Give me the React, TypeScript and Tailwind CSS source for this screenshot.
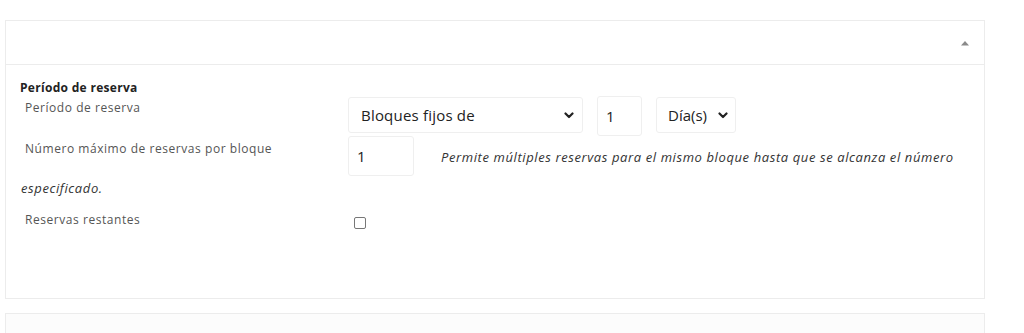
import React from "react";

function Chevron({ className = "" }: { className?: string }) {
  return (
    <svg width="10" height="7" viewBox="0 0 10 7" className={className}>
      <path d="M1.5 1.5 L5 5 L8.5 1.5" fill="none" stroke="#222" strokeWidth="2.2" strokeLinecap="round" strokeLinejoin="round" />
    </svg>
  );
}

export default function App() {
  const font = { fontFamily: '"Open Sans", "DejaVu Sans", sans-serif' };
  return (
    <div className="bg-white w-[1024px] h-[333px] overflow-hidden pt-[20px] pl-[5px]" style={font}>
      <div className="w-[980px] border border-[#ececec]">
        <div className="h-[44px] border-b border-[#ececec] flex items-center justify-end pr-[14px]">
          <svg width="10" height="6" viewBox="0 0 10 6">
            <path d="M1 5.5 L5 1 L9 5.5 Z" fill="#8a8a8a" />
          </svg>
        </div>
        <div className="px-[14px] pt-[15px] pb-[69px]">
          <div className="text-[12px] leading-[16px] font-bold text-[#222] tracking-[0.3px]">Período de reserva</div>
          <div className="flex items-start">
            <div className="w-[328px] pl-[5px] pt-[4px] text-[12px] leading-[16px] text-[#555] tracking-[0.55px]">Período de reserva</div>
            <div className="flex items-start gap-[14px]">
              <div className="w-[235px] h-[36px] mt-[1px] border border-[#efefef] rounded-[3px] flex items-center justify-between pl-[12px] pr-[8px] text-[15px] text-[#222]">
                <span className="tracking-[0.2px]">Bloques fijos de</span>
                <Chevron />
              </div>
              <div className="w-[45px] h-[40px] border border-[#efefef] rounded-[3px] flex items-center pl-[8px] text-[15px] text-[#222]">1</div>
              <div className="w-[80px] h-[36px] mt-[1px] border border-[#efefef] rounded-[3px] flex items-center justify-between pl-[11px] pr-[7px] text-[15px] text-[#222]">
                <span>Día(s)</span>
                <Chevron />
              </div>
            </div>
          </div>
          <div className="flex items-start">
            <div className="w-[328px] pl-[5px] pt-[5px] text-[12px] leading-[16px] text-[#555] tracking-[0.55px]">Número máximo de reservas por bloque</div>
            <div className="w-[66px] h-[40px] border border-[#efefef] rounded-[3px] flex items-center pl-[8px] text-[15px] text-[#222]">1</div>
            <div className="ml-[27px] pt-[13px] text-[13px] leading-[16px] italic text-[#333] tracking-[0.6px]">
              Permite múltiples reservas para el mismo bloque hasta que se alcanza el número
            </div>
          </div>
          <div className="mt-[4px] pl-[1px] text-[13px] leading-[16px] italic text-[#333] tracking-[0.6px]">especificado.</div>
          <div className="flex items-start mt-[16px]">
            <div className="w-[328px] pl-[5px] text-[12px] leading-[16px] text-[#555] tracking-[0.55px]">Reservas restantes</div>
            <div className="ml-[6px] mt-[5px] w-[12px] h-[12px] border border-[#777] rounded-[2px] bg-white" />
          </div>
        </div>
      </div>
      <div className="w-[980px] h-[40px] mt-[14px] border border-[#ececec] bg-[#fcfcfc]" />
    </div>
  );
}
